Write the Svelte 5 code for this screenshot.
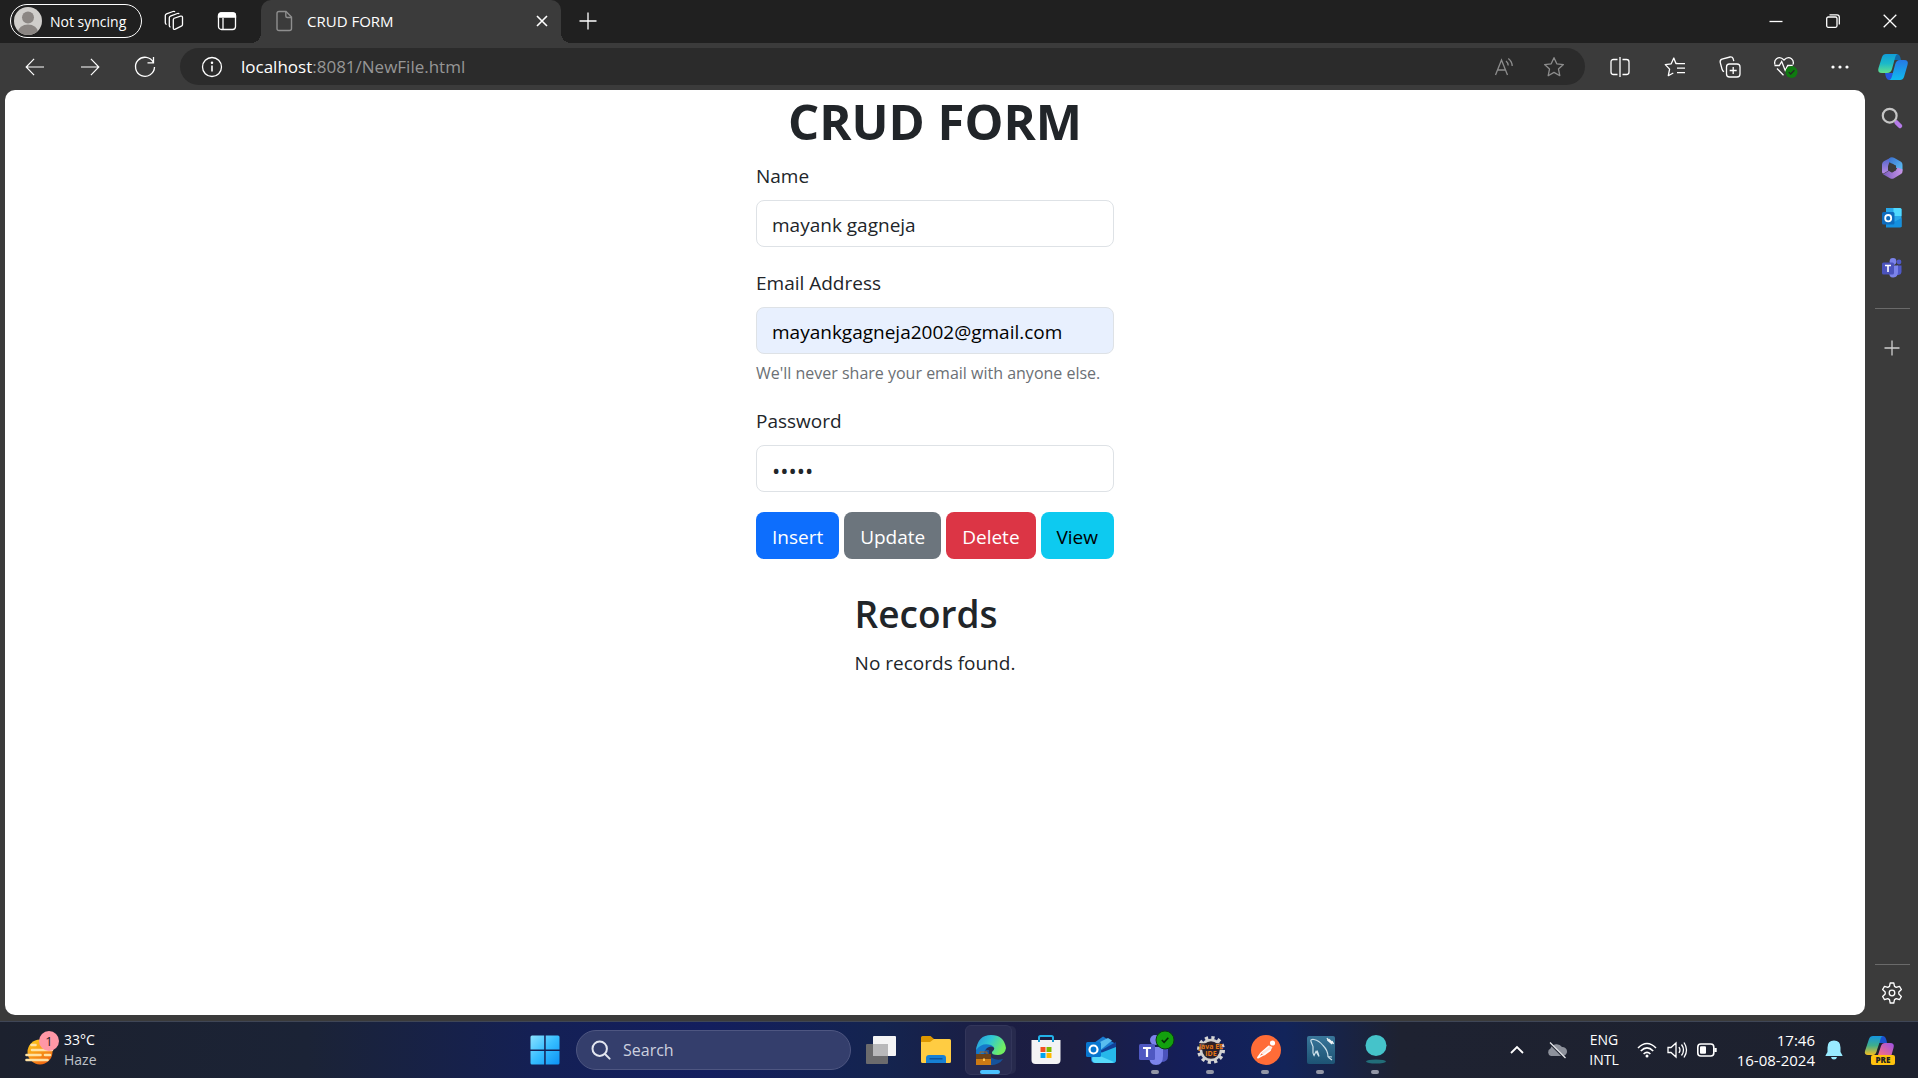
<script lang="ts">
  let name = $state('mayank gagneja');
  let email = $state('mayankgagneja2002@gmail.com');
  let password = $state('admin');
</script>

<svelte:head><title>CRUD FORM</title></svelte:head>

<div class="desktop">
  <header class="titlebar">
    <button class="profile">
      <svg width="28" height="28" viewBox="0 0 28 28" aria-hidden="true">
        <clipPath id="avatar"><circle cx="14" cy="14" r="14" /></clipPath>
        <g clip-path="url(#avatar)">
          <rect width="28" height="28" fill="#d0cecb" />
          <circle cx="14" cy="10.500" r="6" fill="#8b8683" />
          <ellipse cx="14" cy="25" rx="10" ry="7.500" fill="#8b8683" />
        </g>
      </svg>
      <span>Not syncing</span>
    </button>
    <div class="title-tools">
      <button aria-label="Workspaces">
        <svg width="22" height="22" viewBox="0 0 22 22" class="line">
          <path d="M10.500 8.500 17.500 6.200q2-.5 2 1.300v7q0 1.200-1.200 1.700l-6 3q-2 .8-2-1.200V9.800q0-.9.800-1.300z" />
          <path d="M7.500 17.200q-1.200-.3-1.200-1.700V7.800q0-1.200 1.100-1.700l7-2.600q1.200-.4 1.800.4" />
          <path d="M3.600 14.500q-1.300-.4-1.300-1.700V5.600q0-1.200 1.200-1.700l6.500-2.400q1.400-.4 2 .3" />
        </svg>
      </button>
      <button aria-label="Tab actions">
        <svg width="20" height="20" viewBox="0 0 20 20" class="line">
          <rect x="1.500" y="2" width="17" height="16.500" rx="3" />
          <path d="M1.500 6V4.500Q1.500 2 4 2h12q2.500 0 2.500 2.500V6z" fill="#fff" /><path d="M6 7v11" />
        </svg>
      </button>
    </div>
    <div class="tab">
      <svg width="17" height="22" viewBox="0 0 17 22" fill="none" stroke="#8f8f8f" stroke-width="1.400" aria-hidden="true">
        <path d="M3 1.500h7L15.500 7v11.500q0 2-2 2H3q-2 0-2-2v-15q0-2 2-2z" /><path d="M9.800 1.500V6q0 1.500 1.500 1.500h4" />
      </svg>
      <span>CRUD FORM</span>
      <button aria-label="Close tab">
        <svg width="12" height="12" viewBox="0 0 12 12" class="line"><path d="m1 1 10 10M11 1 1 11" stroke-width="1.600" /></svg>
      </button>
    </div>
    <button class="new-tab" aria-label="New tab">
      <svg width="18" height="18" viewBox="0 0 18 18" class="line"><path d="M9 .5v17M.5 9h17" /></svg>
    </button>
    <div class="window-controls">
      <button aria-label="Minimize"><svg width="14" height="14" viewBox="0 0 14 14" class="line"><path d="M.5 7.500h13" /></svg></button>
      <button aria-label="Restore">
        <svg width="14" height="14" viewBox="0 0 14 14" class="line"><rect x=".7" y="3" width="10.300" height="10.300" rx="1.500" /><path d="M3.500.8h7.500q2.300 0 2.300 2.300v7.400" /></svg>
      </button>
      <button aria-label="Close"><svg width="14" height="14" viewBox="0 0 14 14" class="line"><path d="m.7.7 12.600 12.600M13.300.7.7 13.300" /></svg></button>
    </div>
  </header>

  <nav class="toolbar" aria-label="Browser">
    <div class="nav-buttons">
      <button aria-label="Back"><svg width="20" height="18" viewBox="0 0 22 20" class="line"><path d="M21 10H1.500M10 1 1.200 10l8.800 9" /></svg></button>
      <button aria-label="Forward"><svg width="20" height="18" viewBox="0 0 22 20" class="line"><path d="M1 10h19.500M12 1l8.800 9-8.800 9" /></svg></button>
      <button aria-label="Refresh">
        <svg width="22" height="22" viewBox="0 0 22 22" class="line"><path d="M19.500 6.500A9.500 9.500 0 1 0 20.500 11M19.500 1v5.800h-6" /></svg>
      </button>
    </div>
    <div class="address">
      <button aria-label="Site information">
        <svg width="22" height="22" viewBox="0 0 22 22" class="line"><circle cx="11" cy="11" r="9.500" /><path d="M11 9.500v6" stroke-width="1.600" /><circle cx="11" cy="6.700" r=".6" fill="#fff" /></svg>
      </button>
      <a href="#top">localhost<span>:8081/NewFile.html</span></a>
      <button aria-label="Read aloud">
        <svg width="20" height="20" viewBox="0 0 20 20" class="line dim"><path d="M1.500 18 7.500 3l6 15M3.500 13h8M12 4q2 1.500 2.200 4.500M14.300 1.500q3.800 3 3.900 7.500" /></svg>
      </button>
      <button aria-label="Add to favorites">
        <svg width="22" height="22" viewBox="0 0 22 22" class="line dim"><path d="m11 1.700 2.800 6.100 6.600.8-4.900 4.500 1.300 6.600-5.800-3.300-5.800 3.300 1.300-6.600-4.900-4.500 6.600-.8z" stroke-linejoin="round" /></svg>
      </button>
    </div>
    <div class="browser-tools">
      <button aria-label="Split screen">
        <svg width="20" height="22" viewBox="0 0 20 22" class="line"><path d="M7.500 3.500h-4Q1 3.500 1 6v10q0 2.500 2.500 2.500h4M12.500 3.500h4Q19 3.500 19 6v10q0 2.500-2.500 2.500h-4M10 1v20" /></svg>
      </button>
      <button aria-label="Favorites">
        <svg width="22" height="22" viewBox="0 0 22 22" class="line" stroke-linejoin="round"><path d="M13.400 7.500h-1.500L9.800 2 7.200 7.800 1.300 8.600l4.300 4.500-1.300 6.600 5-2.700M12 7.700h9M13 12.200h8M13 16.700h8" /></svg>
      </button>
      <button aria-label="Collections">
        <svg width="22" height="22" viewBox="0 0 22 22" class="line"><rect x="7.500" y="8" width="13.500" height="13" rx="3" /><path d="M14.200 11v7M10.700 14.500h7M5 15.800Q3.500 15 3 13L1.200 6.300Q.8 4 3 3.200l8-2.200q2.300-.4 3.100 1.600l.7 2.600" /></svg>
      </button>
      <button aria-label="Browser essentials">
        <svg width="24" height="22" viewBox="0 0 24 22" class="line">
          <path d="M2 8.500Q.8 5 3.500 2.700 7.300 0 11 4q3.700-4 7.500-1.300Q21.200 5 20 8.500M4 12.500l6.500 6.700M1.500 9.500h4.800l2.400-4 3.500 9 2.500-5h5" /><circle cx="18.500" cy="16" r="6" fill="#0f7a10" stroke="none" /><path d="m15.800 16.100 1.900 1.900 3.700-3.800" stroke="#262626" />
        </svg>
      </button>
      <button aria-label="Settings and more"><svg width="18" height="4" viewBox="0 0 18 4" fill="#fff"><circle cx="2" cy="2" r="1.600" /><circle cx="9" cy="2" r="1.600" /><circle cx="16" cy="2" r="1.600" /></svg></button>
      <button class="copilot" aria-label="Copilot">
        <svg width="30" height="28" viewBox="0 0 30 28">
          <defs>
            <linearGradient id="cpa" x1="0" y1="0" x2="0" y2="1"><stop offset="0" stop-color="#119dd8" /><stop offset=".5" stop-color="#1bb9c9" /><stop offset="1" stop-color="#63e08b" /></linearGradient>
            <linearGradient id="cpb" x1="0" y1="0" x2="0" y2="1"><stop offset="0" stop-color="#2678e5" /><stop offset="1" stop-color="#10bbee" /></linearGradient>
          </defs>
          <path d="M15 1h4q3 0 4 6h-8z" fill="#126aaa" /><path d="M7 20h8l-1 7H11q-3 0-4-7z" fill="#2457df" />
          <path d="M8 1h12q-2 0-3 4l-3 11q-1 4-5 4H4q-5 0-3.500-5L4 4q1-3 4-3z" fill="url(#cpa)" />
          <path d="M22 27H11q2 0 3-4l3-11q1-5 5-5h4q5 0 3.500 5L26 24q-1 3-4 3z" fill="url(#cpb)" />
        </svg>
      </button>
    </div>
  </nav>

  <div class="workspace">
    <main id="top">
      <form onsubmit={(event) => event.preventDefault()}>
        <h1>CRUD FORM</h1>
        <label for="name">Name</label>
        <input id="name" type="text" bind:value={name} />
        <label for="email">Email Address</label>
        <input id="email" class="filled" type="email" bind:value={email} aria-describedby="email-help" />
        <p class="help" id="email-help">We'll never share your email with anyone else.</p>
        <label for="password">Password</label>
        <input id="password" type="password" autocomplete="off" bind:value={password} />
        <div class="actions">
          <button type="button" class="insert">Insert</button>
          <button type="button" class="update">Update</button>
          <button type="button" class="delete">Delete</button>
          <button type="button" class="view">View</button>
        </div>
      </form>
      <section class="records">
        <h2>Records</h2>
        <p>No records found.</p>
      </section>
    </main>

    <aside aria-label="Browser sidebar">
      <button aria-label="Search sidebar">
        <svg width="22" height="22" viewBox="0 0 22 22" fill="none"><path d="m15.500 15.500 3.500 3.500" stroke="#b57be8" stroke-width="4.500" stroke-linecap="round" /><circle cx="8.700" cy="8.700" r="6.900" stroke="#c5c5c5" stroke-width="2.200" /></svg>
      </button>
      <button aria-label="Microsoft 365">
        <svg width="22" height="22" viewBox="0 0 22 22">
          <defs>
            <linearGradient id="ma" x1="0" y1="0" x2="0" y2="1"><stop offset="0" stop-color="#4a63c8" /><stop offset="1" stop-color="#b98be6" /></linearGradient>
            <linearGradient id="mb" x1="0" y1="0" x2="1" y2="1"><stop offset="0" stop-color="#3a6fd0" /><stop offset="1" stop-color="#5ec4f5" /></linearGradient>
            <linearGradient id="mc" x1="0" y1="0" x2="1" y2="0"><stop offset="0" stop-color="#7a5cc0" /><stop offset="1" stop-color="#c895e8" /></linearGradient>
          </defs>
          <path d="M10.500.3 2.800 4.300Q1 5.500 1 7.500v7.500q0 1.500 1.500 1.500l5-3V7.500z" fill="url(#ma)" />
          <path d="M9 .8q2-1 4 0l7 4q1.500 1 1.500 3v6l-6.500-3V9L8 5V2z" fill="url(#mb)" />
          <path d="M21.500 12.500v2q0 1.800-1.500 2.600l-7 4.200q-2 1-4 0L2 17.200l6-3.400 3 1.700 4-2.500 1.500-2.600z" fill="url(#mc)" />
          <path d="m11 6.500 4 2.300v4.400l-4 2.400-4-2.400V8.800z" fill="#3b3b3b" />
        </svg>
      </button>
      <button aria-label="Outlook">
        <svg width="20" height="20" viewBox="0 0 20 20"><path d="M4 0h14q1.500 0 1.500 1.500V19H4z" fill="#28a8ea" /><path d="M11.500 0H18q1.500 0 1.500 1.500V8h-8z" fill="#50d9ff" /><path d="m4 11 8 3 7.500-4V18q0 1.500-1.500 1.500H4z" fill="#1490df" /><rect y="4" width="12.500" height="12.500" rx="1.500" fill="#0f6cbd" /><ellipse cx="6.200" cy="10.200" rx="3" ry="3.200" fill="none" stroke="#fff" stroke-width="1.800" /></svg>
      </button>
      <button aria-label="Teams">
        <svg width="20" height="20" viewBox="0 0 20 20"><circle cx="17" cy="4" r="2.400" fill="#5059c9" /><circle cx="11" cy="3.400" r="3.400" fill="#7b83eb" /><path d="M15 7.500h4.500v6q0 3-3 3.500H14z" fill="#5059c9" /><path d="M7 7.500h9v6.500q0 5-4.500 5.500T7 14z" fill="#7b83eb" /><rect y="4.500" width="12" height="12" rx="1.500" fill="#4b53bc" /><path d="M3 7.500h6M6 7.500V14" stroke="#fff" stroke-width="1.600" /></svg>
      </button>
      <hr />
      <button aria-label="Customize sidebar"><svg width="16" height="16" viewBox="0 0 16 16" class="line grey"><path d="M8 .5v15M.5 8h15" /></svg></button>
      <hr class="last" />
      <button aria-label="Sidebar settings">
        <svg width="22" height="22" viewBox="0 0 22 22" class="line" stroke-linejoin="round"><path d="m9.200 1-.7 3.400-1.700 1L3.500 4.300 1.600 7.500l2.600 2.400v2.200l-2.600 2.400 1.900 3.200 3.300-1.100 1.700 1 .7 3.400h3.600l.7-3.400 1.700-1 3.300 1.100 1.900-3.200-2.600-2.400V9.900l2.600-2.400-1.900-3.200-3.300 1.100-1.700-1-.7-3.400z" /><circle cx="11" cy="11" r="2.800" /></svg>
      </button>
    </aside>
  </div>

  <footer class="taskbar">
    <button class="weather">
      <svg width="36" height="36" viewBox="0 0 36 36" aria-hidden="true">
        <defs><linearGradient id="sun" x1="0" y1="0" x2=".6" y2="1"><stop offset="0" stop-color="#ffd21c" /><stop offset="1" stop-color="#f26a13" /></linearGradient></defs>
        <circle cx="16" cy="20" r="12.500" fill="url(#sun)" /><path d="M7.500 13h4M8 18h20M2.500 23h14M21 23h5M2.500 28h21" stroke="#ffe2a3" stroke-width="2.600" stroke-linecap="round" /><circle cx="25" cy="9" r="10" fill="#ff97a6" />
        <text x="25" y="14" text-anchor="middle" font-size="13" fill="#2b1d25">1</text>
      </svg>
      <span><span>33°C</span><span class="haze">Haze</span></span>
    </button>

    <div class="apps">
      <button aria-label="Start">
        <svg width="30" height="30" viewBox="0 0 30 30"><defs><linearGradient id="win" x1="0" y1="0" x2="1" y2="1"><stop offset="0" stop-color="#8be2ff" /><stop offset=".5" stop-color="#36bdff" /><stop offset="1" stop-color="#0c92f5" /></linearGradient></defs><path d="M2 .5h12.200v14H.5V2Q.5.500 2 .5zM15.700.5H28q1.500 0 1.500 1.500v12.500H15.700zM.5 16h13.700v13.500H2Q.5 29.500.5 28zM15.700 16h13.800v12q0 1.500-1.500 1.500H15.700z" fill="url(#win)" /></svg>
      </button>
      <label class="search">
        <svg width="20" height="20" viewBox="0 0 20 20" fill="none" stroke="#e3e6f0" stroke-width="2" stroke-linecap="round" aria-hidden="true"><circle cx="8.700" cy="8.700" r="7.200" /><path d="m14 14 4.600 4.600" /></svg>
        <input type="text" placeholder="Search" aria-label="Search" />
      </label>
      <button aria-label="Task view">
        <svg width="30" height="30" viewBox="0 0 30 30"><rect y="9" width="22" height="20" rx="1" fill="#6b6b6d" /><rect x="7" y="1" width="23" height="20" rx="1" fill="#f4f4f5" /><path d="M7 9h15v12H7z" fill="#b8b8ba" /></svg>
      </button>
      <button aria-label="File Explorer">
        <svg width="30" height="28" viewBox="0 0 30 28"><path d="M1.500 0h8L13 3h15v8H0V1.500Q0 0 1.500 0z" fill="#dd9700" /><path d="M0 6h9l4-3h15.500Q30 3 30 4.500v21q0 1.500-1.500 1.500h-27Q0 27 0 25.500z" fill="#ffcc42" /><path d="M5 27v-5q0-3 3-3h14q3 0 3 3v5z" fill="#1680d4" /><path d="M8.500 22.800h13" stroke="#0b4c94" stroke-width="1.300" /></svg>
      </button>
      <button class="current running" aria-label="Edge">
        <svg width="32" height="32" viewBox="0 0 32 32">
          <defs><linearGradient id="edge" x1="0" y1="0" x2="1" y2=".4"><stop offset="0" stop-color="#2693df" /><stop offset=".5" stop-color="#2fc7d5" /><stop offset="1" stop-color="#72ee61" /></linearGradient></defs>
          <path d="M2 15v8q2 8 12 8 10 .5 14-6-6 2-11-1-4-3-3-8z" fill="#15529c" /><path d="M1 18Q1 6 12 6q8 1 8 8-4-3-8 0-6 5-1 13 3 4 8 4Q1 32 1 18z" fill="#1578ca" />
          <path d="M1 16Q3 1 16 1t15 13q-1 7-8 7-7 0-6-3 5-4-1-7-9-3-15 5z" fill="url(#edge)" /><rect x="1" y="20" width="15" height="11" fill="#cc7a14" /><path d="M1 20h15v5H1z" fill="#6e4317" /><path d="M5 20v-2h7v2" fill="none" stroke="#a26524" /><rect x="8" y="24.500" width="2" height="2.500" fill="#ffc450" />
        </svg>
      </button>
      <button aria-label="Microsoft Store">
        <svg width="30" height="30" viewBox="0 0 30 30"><path d="M8 8V2.500Q8 1 9.500 1h11Q22 1 22 2.500V8" fill="none" stroke="#22b1e8" stroke-width="2" /><path d="M.5 5h29v20q0 4-4 4h-21q-4 0-4-4z" fill="#f3f3f5" /><path d="M8 4.500V7M22 4.500V7" stroke="#159ad1" stroke-width="2" /><path fill="#f25022" d="M9.500 12h5v5h-5z" /><path fill="#7fba00" d="M15.500 12h5v5h-5z" /><path fill="#00a4ef" d="M9.500 18h5v5h-5z" /><path fill="#ffb900" d="M15.500 18h5v5h-5z" /></svg>
      </button>
      <button aria-label="Outlook mail">
        <svg width="30" height="28" viewBox="0 0 30 28"><path d="M5 9 17 .5 30 8v16q0 3-3 3H9q-4 0-4-4z" fill="#1a7bd0" /><path d="m8 9 14-7 4 2.500L12 16z" fill="#59bdf0" /><path d="m14 15 16-9v10L20 20z" fill="#123f96" /><path d="m7 20 23-9v13q0 3-3 3H9z" fill="#26b8ea" /><path d="m7 17 21 9q-1 1-3 1H10q-4 0-4-4z" fill="#57dafa" /><rect y="6" width="15" height="15" rx="1.500" fill="#0876cf" /><circle cx="7.500" cy="13.500" r="4" fill="none" stroke="#fff" stroke-width="2.200" /></svg>
      </button>
      <button class="running" aria-label="Microsoft Teams">
        <svg width="36" height="36" viewBox="0 0 36 36"><circle cx="17" cy="8" r="5" fill="#7b83eb" /><path d="M20 15h10v9q0 6-7 6z" fill="#4b53bc" /><path d="M11 15h14v9q0 9-7 9t-7-9z" fill="#7b83eb" /><rect x="1" y="12" width="16" height="16" rx="1.500" fill="#4f58c2" /><path d="M5 16h8M9 16v9" stroke="#fff" stroke-width="2.200" /><circle cx="27" cy="8" r="9" fill="#13a10e" stroke="#0a3d12" stroke-width="1" /><path d="m23.800 8 2.300 2.300 4.200-4.600" fill="none" stroke="#062c08" stroke-width="1.600" /></svg>
      </button>
      <button class="running" aria-label="Eclipse Java EE IDE">
        <svg width="30" height="30" viewBox="0 0 30 30"><circle cx="15" cy="15" r="12" fill="none" stroke="#d5d5d5" stroke-width="4" stroke-dasharray="3.140 3.140" /><circle cx="15" cy="15" r="10" fill="#252030" stroke="#d0d0d0" stroke-width="2.500" /><rect x="4" y="8" width="22" height="7" fill="#302020" opacity=".7" /><text x="15" y="14" text-anchor="middle" font-size="7" font-weight="700" fill="#e47716">Java EE</text><text x="15" y="21" text-anchor="middle" font-size="7" font-weight="700" fill="#e47716">IDE</text></svg>
      </button>
      <button class="running" aria-label="Postman">
        <svg width="30" height="30" viewBox="0 0 30 30"><circle cx="15" cy="15" r="15" fill="#ff6c37" /><circle cx="21.500" cy="8" r="2.600" fill="#fff" /><path d="m18 10.500 3.500 1.500-2 4-6 4.500-3-2z" fill="#ffe6dc" /><path d="m18 11-8 7-3.500 5 6-3 7-5" fill="none" stroke="#fff" stroke-width="1.400" /></svg>
      </button>
      <button class="running" aria-label="MySQL Workbench">
        <svg width="28" height="28" viewBox="0 0 28 28"><defs><linearGradient id="sql" x1="0" y1="0" x2="0" y2="1"><stop offset="0" stop-color="#39769a" /><stop offset="1" stop-color="#1d5374" /></linearGradient></defs><rect width="28" height="28" rx="2" fill="url(#sql)" /><path d="M25 24l-4-3M25 21l-4-.5q0-6-5-11-4-5-9-6-4-.5-3 2l2 5v3q-.5 4 1 6l2-4 3 5q-1-4-2-6" fill="none" stroke="#cce0ea" stroke-width="1.200" /><path d="m21 3.500 4.500 4" stroke="#f2f5f7" stroke-width="2.600" /><path d="m20 2 1.500 3M25 5l1.500 3" stroke="#f2f5f7" stroke-width="1.200" /></svg>
      </button>
      <button class="running" aria-label="Assistant">
        <svg width="24" height="30" viewBox="0 0 24 30"><circle cx="12" cy="10.500" r="10.500" fill="#45c3ca" /><ellipse cx="12" cy="26.500" rx="10" ry="2" fill="#258d94" opacity=".7" /></svg>
      </button>
    </div>

    <div class="tray">
      <button class="wide" aria-label="Show hidden icons"><svg width="14" height="10" viewBox="0 0 14 10" class="line"><path d="m1 8 6-6 6 6" stroke-width="1.800" /></svg></button>
      <button class="wide" aria-label="OneDrive">
        <svg width="20" height="18" viewBox="0 0 20 18"><path d="M4 15a4 4 0 0 1-.5-7.500A6.500 6.500 0 0 1 15 6a4.500 4.500 0 0 1 1 9z" fill="#8d919b" /><path d="M2 1.500 17.500 17" stroke="#1f2430" stroke-width="2" /><path d="M3 1.500 18.500 17" stroke="#e8e9ed" stroke-width="1.300" /></svg>
      </button>
      <button class="stack language"><span>ENG</span><span>INTL</span></button>
      <button class="status" aria-label="Network, volume and battery">
        <svg width="20" height="16" viewBox="0 0 20 16" class="line"><path d="M1 6q9-9 18 0M3.800 9q6.200-6.200 12.400 0M6.600 12q3.400-3.400 6.800 0" stroke-width="1.600" /><circle cx="10" cy="14" r="1.500" fill="#fff" stroke="none" /></svg>
        <svg width="20" height="18" viewBox="0 0 20 18" class="line"><path d="M1 6.500v5h3l5 4.500V2L4 6.500zM12 6q2 3 0 6M14.500 3.500q4 5.500 0 11M17 1.500q5 7.500 0 15" /></svg>
        <svg width="20" height="14" viewBox="0 0 20 14" class="line"><rect x=".8" y="1" width="16" height="12" rx="3" stroke-width="1.600" /><rect x="3" y="3.200" width="6" height="7.600" rx="1" fill="#fff" stroke="none" /><path d="M18.500 5v4" stroke-width="2.400" /></svg>
      </button>
      <button class="stack clock"><span>17:46</span><span>16-08-2024</span></button>
      <button class="bell" aria-label="Notifications">
        <svg width="18" height="20" viewBox="0 0 18 20" fill="#99ebff"><path d="M9 .5q6.500 0 6.500 7V12l2 3.500q0 .5-.5.500H1q-.5 0-.5-.5l2-3.500V7.500q0-7 6.500-7zM6 17h6q-.5 2.500-3 2.500T6 17z" /></svg>
      </button>
      <button class="preview" aria-label="Copilot preview">
        <svg width="30" height="30" viewBox="0 0 30 30">
          <defs><linearGradient id="pra" x1="0" y1="0" x2="0" y2="1"><stop offset="0" stop-color="#1495e0" /><stop offset=".5" stop-color="#3fae8b" /><stop offset="1" stop-color="#f4bd20" /></linearGradient><linearGradient id="prb" x1="1" y1="0" x2="0" y2="1"><stop offset="0" stop-color="#9b51e7" /><stop offset="1" stop-color="#fb707f" /></linearGradient></defs>
          <path d="M14 1h4q3 0 4 7h-8z" fill="#1952cf" /><path d="M8 1h10q-2 0-3 5l-3 9q-1 5-4 5H3q-4 0-3-4L4 4q1-3 4-3z" fill="url(#pra)" /><path d="M20 8h5q5 0 3.500 5l-2 7H13l3-9q1-3 4-3z" fill="url(#prb)" /><rect x="6" y="20" width="24" height="10" rx="2" fill="#ffc20e" /><text x="18" y="28" text-anchor="middle" font-size="8" font-weight="800" fill="#222">PRE</text>
        </svg>
      </button>
    </div>
  </footer>
</div>

<style>
  :global(body) { margin: 0; }
  * { box-sizing: border-box; }
  .desktop {
    display: flex;
    flex-direction: column;
    min-height: 100vh;
    background: #3b3b3b;
    color: #fff;
    font-family: "Open Sans", "Noto Sans", sans-serif;
    font-size: 14px;
  }
  button {
    display: flex;
    align-items: center;
    justify-content: center;
    flex: none;
    margin: 0;
    padding: 0;
    border: 0;
    background: none;
    color: inherit;
    font: inherit;
    white-space: nowrap;
  }
  svg { display: block; flex: none; overflow: visible; }
  .line { fill: none; stroke: #fff; stroke-width: 1.3px; }
  .dim { stroke: #8d8d8d; }
  .grey { stroke: #cfcfcf; }

  .titlebar { display: flex; height: 43px; padding-bottom: 1px; background: #202020; }
  .profile { justify-content: flex-start; gap: 8px; width: 132px; height: 34px; margin: 4px 0 0 10px; padding-left: 3px; border: 1px solid #fff; border-radius: 17px; }
  .title-tools { display: flex; margin: 0 8px 0 5px; }
  .title-tools button { width: 53px; }
  .tab { position: relative; display: flex; align-items: center; gap: 14px; width: 300px; height: 43px; padding: 0 4px 2px 15px; border-radius: 10px 10px 0 0; background: #3b3b3b; font-size: 15px; }
  .tab::before, .tab::after { content: ""; position: absolute; bottom: 0; width: 10px; height: 10px; }
  .tab::before { right: 100%; background: radial-gradient(circle at 0 0, #202020 10px, #3b3b3b 10px); }
  .tab::after { left: 100%; background: radial-gradient(circle at 100% 0, #202020 10px, #3b3b3b 10px); }
  .tab button { width: 30px; height: 30px; margin-left: auto; }
  .new-tab { width: 54px; }
  .window-controls { display: flex; margin-left: auto; }
  .window-controls button { width: 57px; }

  .toolbar { display: flex; align-items: center; height: 47px; }
  .nav-buttons, .browser-tools { display: flex; }
  .nav-buttons { margin: 0 8px 0 7px; }
  .nav-buttons button, .browser-tools button { width: 55px; height: 37px; }
  .browser-tools { margin-left: 7px; }
  .browser-tools .copilot { width: 51px; }
  .address { display: flex; align-items: center; flex: 1; height: 37px; padding: 0 6px 0 7px; border-radius: 19px; background: #2b2b2b; }
  .address button { width: 50px; height: 37px; }
  .address a { flex: 1; padding-left: 4px; color: #fff; font-size: 17px; text-decoration: none; }
  .address a span { color: #969696; }

  .workspace { display: flex; flex: 1; }
  main { flex: 1; display: flex; flex-direction: column; align-items: center; margin: 0 0 6px 5px; border-radius: 10px; background: #fff; color: #212529; font-size: 19px; line-height: 30px; }
  form { display: flex; flex-direction: column; width: 358px; padding-top: 1px; }
  h1, h2, p { margin: 0; }
  h1 { margin-bottom: 10px; font-size: 49px; font-weight: 700; line-height: 60px; text-align: center; white-space: nowrap; }
  form label { margin-bottom: 9px; }
  form input { width: 100%; height: 47px; margin: 0 0 21px; padding: 2px 15px 0; border: 1px solid #dee2e6; border-radius: 8px; background: #fff; color: #212529; font: inherit; }
  form .filled { margin-bottom: 6px; background: #e8f0fe; color: #000; }
  #password { margin-bottom: 20px; font-size: 22px; }
  .help { margin-bottom: 20px; color: #6b7075; font-size: 16px; line-height: 26px; white-space: nowrap; }
  .actions { display: flex; gap: 5px; }
  .actions button { flex: 1 1 auto; height: 47px; padding-top: 2px; border-radius: 8px; color: #fff; }
  .actions .insert { background: #0d6efd; }
  .actions .update { background: #6c757d; }
  .actions .delete { background: #dc3545; }
  .actions .view { background: #0dcaf0; color: #000; }
  .records { margin-top: 31px; }
  h2 { margin-bottom: 10px; font-size: 37px; font-weight: 600; line-height: 48px; }

  aside { display: flex; flex-direction: column; align-items: center; width: 53px; padding: 3px 0 3px 1px; }
  aside button { width: 50px; height: 50px; }
  hr { width: 35px; height: 1px; margin: 15px 0 14px; border: 0; background: #6a6a6a; }
  hr.last { margin: auto 0 3px; }

  .taskbar { display: grid; grid-template-columns: 1fr auto 1fr; height: 57px; border-top: 1px solid #3f4656; background: linear-gradient(90deg, #1c212e 0, #1b2336 16%, #142055 28%, #131e5e 37%, #14244f 46%, #1b1d43 52%, #1c1e42 56%, #141e59 62%, #12245a 67%, #1e2231 73%, #1d212e 100%); }
  .weather { justify-self: start; gap: 4px; padding-left: 24px; text-align: left; line-height: 20px; }
  .weather > span, .stack { display: flex; flex-direction: column; }
  .haze { color: #bfc2c8; }
  .apps { display: flex; align-items: center; padding-left: 2px; }
  .apps button { position: relative; width: 55px; height: 50px; }
  .running::after { content: ""; position: absolute; bottom: 1px; left: 23px; width: 8px; height: 4px; border-radius: 2px; background: #9296a6; }
  .current::before { content: ""; position: absolute; z-index: 0; inset: 0 6px 0 2px; border: 1px solid #33365a; border-radius: 6px; background: #292c51; box-shadow: 5px 0 0 -1px #272a4d; }
  .current svg { position: relative; }
  .apps .current::after { left: 17px; width: 20px; background: #4cc2ff; }
  .search { display: flex; align-items: center; gap: 12px; width: 275px; height: 40px; margin: 0 2px 0 4px; padding: 0 16px 0 14px; border: 1px solid #4e5681; border-radius: 20px; background: #343e6c; }
  .search input { min-width: 0; flex: 1; padding: 0; border: 0; background: none; color: #fff; font: inherit; font-size: 16px; outline: 0; }
  .search input::placeholder { color: #ccd0df; opacity: 1; }
  .tray { display: flex; justify-content: flex-end; line-height: 20px; }
  .tray .wide { width: 40px; }
  .tray .language { width: 54px; }
  .tray .status { gap: 10px; width: 92px; }
  .tray .clock { align-items: flex-end; width: 92px; margin-right: 1px; font-size: 15px; }
  .tray .bell { width: 36px; }
  .tray .preview { width: 56px; margin-right: 10px; }
</style>
